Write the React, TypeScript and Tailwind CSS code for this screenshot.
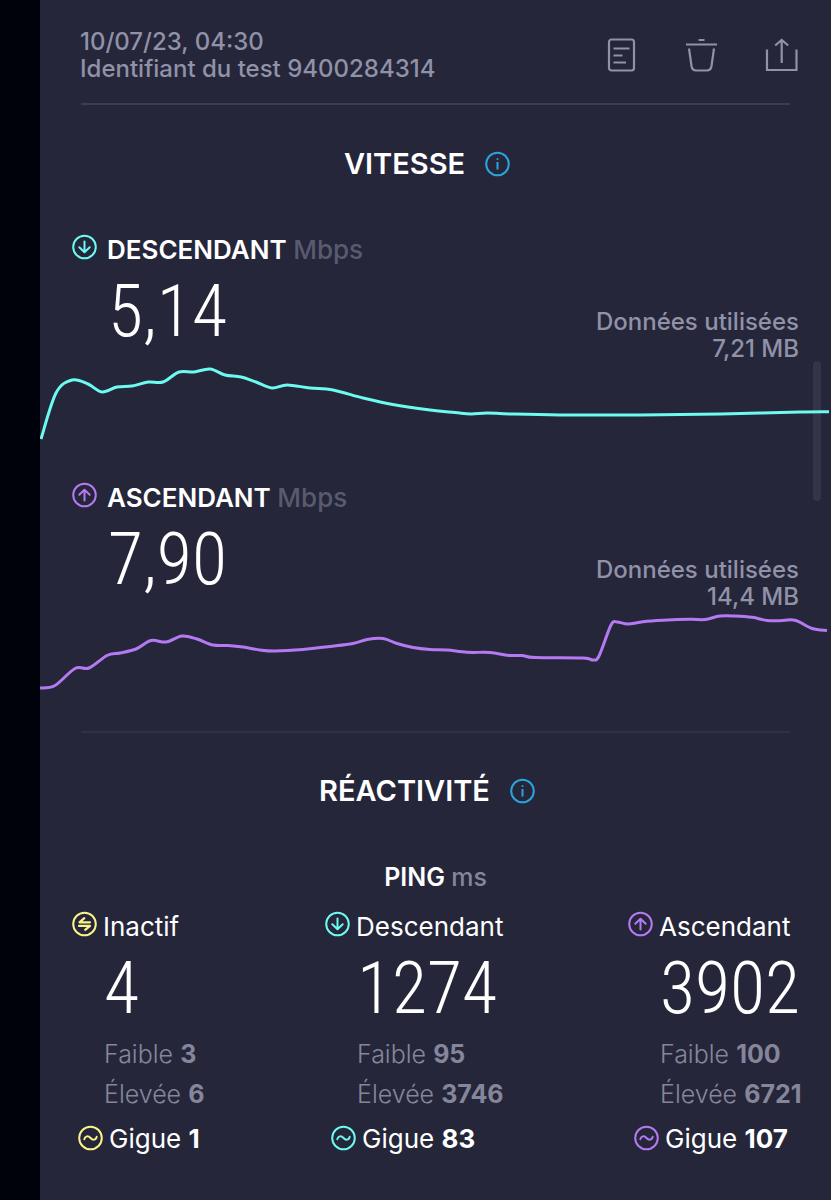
import type { ReactNode } from "react";

type Point = [number, number];

const downloadPoints: Point[] = [
  [1, 77], [16, 31], [32, 18], [48, 22], [62, 30], [77, 25], [92, 24], [108, 20], [123, 20],
  [139, 10], [154, 10], [170, 7], [185, 13], [201, 15], [216, 20], [232, 26], [247, 23],
  [270, 26], [293, 28], [323, 36], [350, 42], [390, 48], [415, 50.5], [431, 52], [447, 51],
  [470, 52], [520, 53], [600, 53], [660, 52.3], [720, 51], [760, 50], [789, 49.7],
];

const uploadPoints: Point[] = [
  [0, 78], [15, 75.5], [35, 58.5], [49, 58], [67, 45.5], [80, 43], [96, 39], [111, 30.5],
  [126, 32], [142, 26], [157, 29], [173, 35], [188, 35.5], [203, 37], [220, 40], [235, 41],
  [263, 39.5], [290, 36.5], [313, 33.5], [327, 29.5], [343, 28.5], [357, 33.5], [373, 37.5],
  [390, 39.5], [407, 40], [427, 42.3], [450, 42.5], [467, 45.3], [482, 45.5], [495, 47.5],
  [543, 48], [553, 50], [559, 46], [571, 15], [577, 12], [588, 14], [603, 11.7], [623, 10.3],
  [650, 9.3], [665, 9.5], [680, 6], [695, 6], [712, 7.3], [727, 10.5], [740, 10.7], [755, 10.3],
  [772, 18.5], [787, 20.5],
];

function smooth(points: Point[]) {
  let d = `M${points[0][0]} ${points[0][1]}`;
  for (let i = 1; i < points.length; i++) {
    const [x0, y0] = points[Math.max(i - 2, 0)];
    const [x1, y1] = points[i - 1];
    const [x2, y2] = points[i];
    const [x3, y3] = points[Math.min(i + 1, points.length - 1)];
    d += `C${x1 + (x2 - x0) / 6} ${y1 + (y2 - y0) / 6} ${x2 - (x3 - x1) / 6} ${y2 - (y3 - y1) / 6} ${x2} ${y2}`;
  }
  return d;
}

function Chart({ points, tone, label }: { points: Point[]; tone: string; label: string }) {
  return (
    <svg viewBox="0 0 791 84" preserveAspectRatio="none" className={`relative block h-[84px] w-full ${tone}`} role="img" aria-label={label}>
      <path d={smooth(points)} fill="none" stroke="currentColor" strokeWidth="3" vectorEffect="non-scaling-stroke" strokeLinejoin="round" />
    </svg>
  );
}

function Ring({ tone, children }: { tone: string; children: ReactNode }) {
  return (
    <svg viewBox="0 0 26 26" className={`size-[26px] shrink-0 ${tone}`} fill="none" stroke="currentColor" strokeWidth="2" strokeLinecap="round" strokeLinejoin="round" aria-hidden="true">
      <circle cx="12.5" cy="13" r="11.3" />
      {children}
    </svg>
  );
}

const Down = () => <path d="M12.5 7.5v10.5M7.3 13.2l5.2 5 5.2-5" />;
const Up = () => <path d="M12.5 18.5V8M7.3 12.8l5.2-5 5.2 5" />;
const Idle = () => <path d="M18 11.3H7.500l4.800-4.200M7 14.900h11l-4.800 4" strokeWidth="2.200" />;
const Wave = () => <path d="M6.300 14.300c.8-3.600 4-3.800 6.200-1.300s5.400 2.300 6.200-1.300" strokeWidth="1.900" />;

function SectionTitle({ children }: { children: string }) {
  return (
    <div className="flex h-10 items-center justify-center gap-5 pr-4">
      <h2 className="text-[29px] font-semibold text-white">{children}</h2>
      <button type="button" aria-label={`Informations : ${children}`} className="text-[#2ba4dc]">
        <Ring tone="">
          <path d="M12.500 11v7.500" strokeLinecap="butt" />
          <path d="M12.500 8v.1" />
        </Ring>
      </button>
    </div>
  );
}

function Figure({ children }: { children: string }) {
  return (
    <p className="font-['Roboto_Condensed',Roboto,sans-serif] text-[72px] leading-[91px] font-light text-white">
      {children}
    </p>
  );
}

function Speed({ icon, tone, name, value, data, points }: {
  icon: ReactNode; tone: string; name: string; value: string; data: string; points: Point[];
}) {
  return (
    <section>
      <div className="px-8">
        <div className="flex h-8 items-start gap-[9px]">
          <Ring tone={tone}>{icon}</Ring>
          <h3 className="text-[26px] leading-8 font-semibold text-white">
            {name} <span className="font-medium text-[#595a6e]">Mbps</span>
          </h3>
        </div>
        <div className="flex h-24 items-start justify-between pl-9">
          <Figure>{value}</Figure>
          <p className="self-end text-right text-[24px] leading-[27px] font-medium text-[#9092a8]">
            Données utilisées
            <br />
            {data}
          </p>
        </div>
      </div>
      <Chart points={points} tone={tone} label={`${name} ${value} Mbps`} />
    </section>
  );
}

function Ping({ icon, tone, name, value, low, high, jitter }: {
  icon: ReactNode; tone: string; name: string; value: string; low: string; high: string; jitter: string;
}) {
  return (
    <div className="text-[26px] whitespace-nowrap">
      <div className="flex h-8 items-start gap-[5px]">
        <Ring tone={tone}>{icon}</Ring>
        <h4 className="leading-8 text-white">{name}</h4>
      </div>
      <div className="pl-8 text-[25px]">
        <Figure>{value}</Figure>
        <p className="leading-10 font-light text-[#85869b]">Faible <b className="font-bold">{low}</b></p>
        <p className="leading-10 font-light text-[#85869b]">Élevée <b className="font-bold">{high}</b></p>
      </div>
      <div className="flex h-12 items-center gap-[5px] pl-[6px] text-white">
        <Ring tone={tone}><Wave /></Ring>
        <p>Gigue <b className="font-bold">{jitter}</b></p>
      </div>
    </div>
  );
}

const headerIcon = { viewBox: "0 0 34 34", className: "size-[34px]", fill: "none", stroke: "currentColor", strokeWidth: 2.2, "aria-hidden": true } as const;

export default function App() {
  return (
    <div className="flex min-h-screen bg-[#00020b] font-['Inter',sans-serif]">
      <div className="w-10 shrink-0" />
      <main className="relative min-w-0 flex-1 bg-[#25263a] pb-8">
        <div className="absolute top-[361px] right-[10px] h-[140px] w-2 rounded-full bg-[#343548]" />
        <header className="flex items-start justify-between pt-7 pr-8 pb-[21px] pl-10 text-[#9092a8]">
          <p className="text-[24px] leading-[27px] font-medium">
            10/07/23, 04:30
            <br />
            Identifiant du test 9400284314
          </p>
          <div className="flex gap-[46px] pt-[10px]">
            <button type="button" aria-label="Détails">
              <svg {...headerIcon}>
                <rect x="4" y="1.5" width="25" height="31" rx="2.5" />
                <path d="M8.5 10.5h16M8.5 17.5h9M8.5 24.5h12.5" />
              </svg>
            </button>
            <button type="button" aria-label="Supprimer">
              <svg {...headerIcon}>
                <path d="M13.5 2h6M1 6.5h31" />
                <path d="M4 10.5l2.500 17.500q.7 4.500 4.500 4.500h11q3.800 0 4.500-4.500l2.500-17.500" />
              </svg>
            </button>
            <button type="button" aria-label="Partager">
              <svg {...headerIcon}>
                <path d="M2 11.500v20.500h29.500V11.500M16.700 25V2M10.200 7.500L16.700 2l6.500 5.500" />
              </svg>
            </button>
          </div>
        </header>
        <hr className="mx-[41px] border-t-2 border-[#3c3d53]" />

        <div className="pt-[39px] pb-[50px]">
          <SectionTitle>VITESSE</SectionTitle>
        </div>
        <Speed icon={<Down />} tone="text-[#6dfaf0]" name="DESCENDANT" value="5,14" data="7,21 MB" points={downloadPoints} />
        <div className="h-9" />
        <Speed icon={<Up />} tone="text-[#b57af2]" name="ASCENDANT" value="7,90" data="14,4 MB" points={uploadPoints} />

        <hr className="mx-[41px] mt-[37px] border-t-2 border-[#303146]" />
        <div className="pt-[38px] pb-[50px]">
          <SectionTitle>RÉACTIVITÉ</SectionTitle>
        </div>
        <h3 className="text-center text-[25px] leading-8 font-semibold text-white">
          PING <span className="font-medium text-[#85869b]">ms</span>
        </h3>
        <div className="grid grid-cols-[253fr_303fr_minmax(0,171fr)] pt-[18px] pr-8 pl-8">
          <Ping icon={<Idle />} tone="text-[#fbf28a]" name="Inactif" value="4" low="3" high="6" jitter="1" />
          <Ping icon={<Down />} tone="text-[#6dfaf0]" name="Descendant" value="1274" low="95" high="3746" jitter="83" />
          <Ping icon={<Up />} tone="text-[#b57af2]" name="Ascendant" value="3902" low="100" high="6721" jitter="107" />
        </div>
      </main>
    </div>
  );
}
